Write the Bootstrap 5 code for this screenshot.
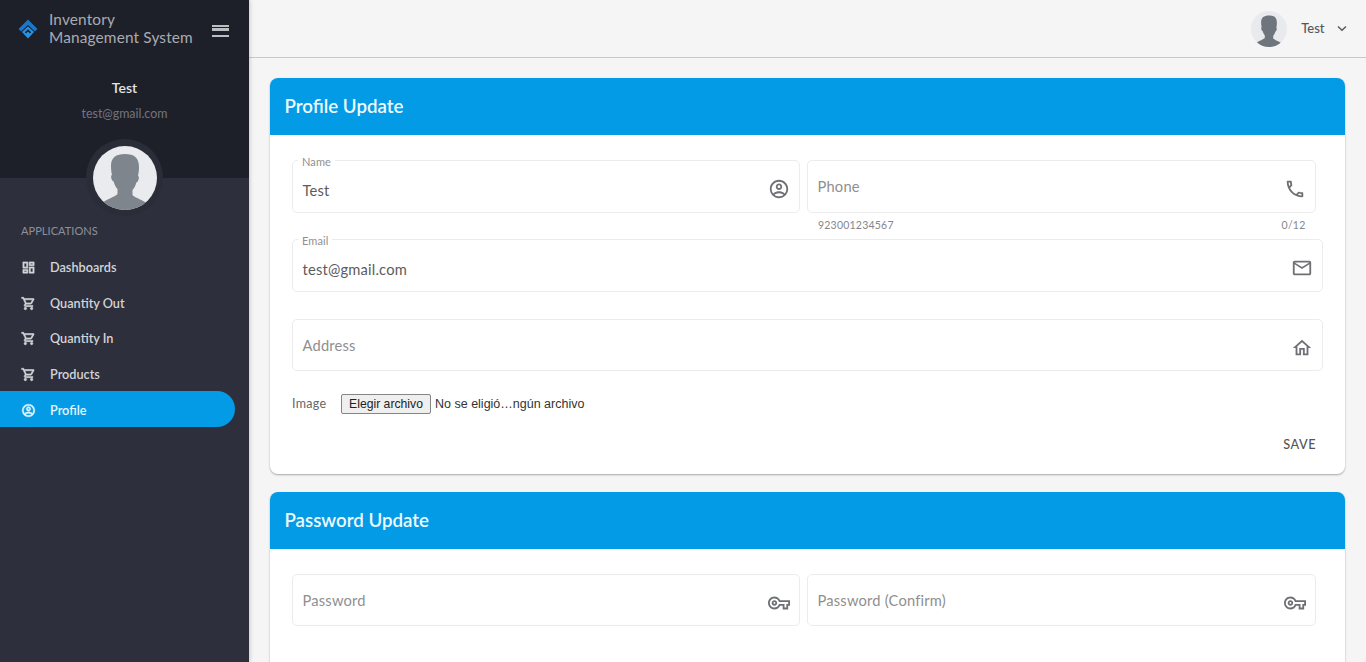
<!DOCTYPE html>
<html lang="en">
<head>
<meta charset="utf-8">
<title>Profile</title>
<link href="https://cdn.jsdelivr.net/npm/bootstrap@5.3.0/dist/css/bootstrap.min.css" rel="stylesheet">
<style>
html,body{height:662px;overflow:hidden}
body{background:#f5f5f5;font-family:"Lato","Open Sans",sans-serif;color:#555;-webkit-font-smoothing:antialiased}
.app-shell{height:662px}
.side-panel{width:249px;flex:none;background:#2d303c;box-shadow:1px 0 4px rgba(0,0,0,.18);z-index:2}
.side-top{height:178px;background:#1e2029}
.brand-row{height:57px;padding:0 20px 0 18px}
.brand-text{font-size:15.4px;line-height:18px;color:#a9abb1;margin-left:11px;margin-top:-2px;letter-spacing:.15px;white-space:nowrap}
.burger{width:17px;height:12px;flex:none;border-top:2.5px solid #bdbec1;border-bottom:2.5px solid #bdbec1;position:relative;margin-left:auto;margin-top:4px}
.burger::after{content:"";position:absolute;left:0;right:0;top:1.500px;height:2.500px;background:#bdbec1}
.user-name{font-size:14px;font-weight:600;color:#e4e4e6;margin-top:22px;line-height:18px;text-align:center}
.user-mail{font-size:12.4px;color:#73757e;margin-top:9px;line-height:16px;text-align:center}
.avatar-ring{width:77px;height:77px;border-radius:50%;background:#2a2c38;padding:6.5px;margin:17px auto 0;position:relative}
.avatar-disc{width:64px;height:64px;border-radius:50%;background:#e9ebee;overflow:hidden;display:block}
.nav-head{font-size:11px;color:#8d8f99;margin:46px 0 0 21px;line-height:14px;letter-spacing:.05px}
.side-list{margin-top:11px;padding:0}
.side-item{height:35.6px;padding-left:21px;padding-top:2px;font-size:12.7px;font-weight:600;color:#d3d4d8;width:235px}
.side-item svg{width:15px;height:15px;fill:currentColor;stroke:currentColor;stroke-width:.9;flex:none;margin-right:14px}
.side-item.is-on{background:#039be5;color:#e6f5fd;border-radius:0 18px 18px 0}
.main-col{min-width:0}
.top-bar{height:58px;background:#f5f5f5;border-bottom:1px solid #c9c9c9;padding-right:19px;flex:none}
.top-avatar{width:36px;height:36px;border-radius:50%;background:#e8eaed;overflow:hidden;display:block}
.top-name{font-size:13px;font-weight:500;color:#55575c;margin:0 12.5px 0 14px}
.page-area{padding:20px 21px 0 21px}
.panel-card{background:#fff;border-radius:8px;box-shadow:0 1px 2px rgba(0,0,0,.32);margin-bottom:17.5px}
.panel-head{height:57px;background:#039be5;border-radius:8px 8px 0 0;padding:0 14.5px;color:#eef9ff;font-size:18.7px;font-weight:600}
.panel-body{padding:25px 22px 0}
.box-field{height:52.5px;border:1px solid #ececec;border-radius:5px;position:relative;padding:0 9px 0 9.5px;font-size:14.7px;letter-spacing:.2px}
.box-field svg{width:22px;height:22px;fill:#6f7074;flex:none;margin-left:auto;margin-top:6px}
.box-field .ph{color:#8f8f8f;margin-top:0}
.box-field .val{color:#5c5c5c;margin-top:7px}
.box-label{position:absolute;left:5px;top:-5px;background:#fff;padding:0 4px;font-size:11px;line-height:12px;color:#8f8f8f;letter-spacing:.1px}
.half-cell{padding-right:7.5px}
.half-cell + .half-cell{margin-left:-.5px;padding-right:7px}
.help-row{font-size:10.5px;color:#85878a;padding:6px 10px 0 11px;line-height:13px;height:26.5px;letter-spacing:.22px}
.gap-field{margin-top:27px}
.upload-row{margin-top:22px;height:22px}
.upload-label{font-size:12.5px;color:#666;width:49px;letter-spacing:.3px}
.pick-btn{font:12.2px "Liberation Sans",Arial,sans-serif;color:#222;background:#efefef;border:1px solid #858585;border-radius:2px;padding:0 7px;height:20px;line-height:18px;width:90px;white-space:nowrap}
.pick-text{font:12.5px "Liberation Sans",Arial,sans-serif;color:#333;margin-left:4px;white-space:nowrap}
.save-row{height:59px;padding:20px 7px 0 0;font-size:12.7px;font-weight:500;letter-spacing:.5px;color:#555;text-align:right;line-height:19px}
</style>
</head>
<body>
<svg width="0" height="0" class="position-absolute">
<defs>
<symbol id="i-account" viewBox="0 0 24 24"><path d="M12 2C6.48 2 2 6.48 2 12s4.48 10 10 10 10-4.48 10-10S17.52 2 12 2zM7.07 18.28c.43-.9 3.05-1.78 4.93-1.78s4.51.88 4.93 1.78C15.57 19.36 13.86 20 12 20s-3.57-.64-4.93-1.72zm11.29-1.45c-1.43-1.74-4.9-2.33-6.36-2.33s-4.93.59-6.36 2.33C4.62 15.49 4 13.82 4 12c0-4.41 3.59-8 8-8s8 3.59 8 8c0 1.82-.62 3.49-1.64 4.83zM12 6c-1.94 0-3.5 1.56-3.5 3.5S10.06 13 12 13s3.5-1.56 3.5-3.5S13.94 6 12 6zm0 5c-.83 0-1.5-.67-1.5-1.5S11.17 8 12 8s1.5.67 1.5 1.5S12.83 11 12 11z"/></symbol>
<symbol id="i-phone" viewBox="0 0 24 24"><path d="M6.54 5c.06.89.21 1.76.45 2.59l-1.2 1.2c-.41-1.2-.67-2.47-.76-3.79h1.51m9.86 12.02c.85.24 1.72.39 2.6.45v1.49c-1.32-.09-2.59-.35-3.8-.75l1.2-1.19M7.5 3H4c-.55 0-1 .45-1 1 0 9.39 7.61 17 17 17 .55 0 1-.45 1-1v-3.49c0-.55-.45-1-1-1-1.24 0-2.45-.2-3.57-.57-.1-.04-.21-.05-.31-.05-.26 0-.51.1-.71.29l-2.2 2.2c-2.83-1.45-5.15-3.76-6.59-6.59l2.2-2.2c.28-.28.36-.67.25-1.02C8.7 6.45 8.5 5.25 8.5 4c0-.55-.45-1-1-1z"/></symbol>
<symbol id="i-mail" viewBox="0 0 24 24"><path d="M22 6c0-1.1-.9-2-2-2H4c-1.1 0-2 .9-2 2v12c0 1.1.9 2 2 2h16c1.1 0 2-.9 2-2V6zm-2 0l-8 5-8-5h16zm0 12H4V8l8 5 8-5v10z"/></symbol>
<symbol id="i-home" viewBox="0 0 24 24"><path d="M12 5.69l5 4.5V18h-2v-6H9v6H7v-7.81l5-4.5M12 3L2 12h3v8h6v-6h2v6h6v-8h3L12 3z"/></symbol>
<symbol id="i-key" viewBox="0 0 24 24"><path d="M22 19h-6v-4h-2.68c-1.14 2.42-3.6 4-6.32 4-3.86 0-7-3.14-7-7s3.14-7 7-7c2.72 0 5.17 1.58 6.32 4H24v6h-2v4zm-4-2h2v-4h2v-2H11.94l-.23-.67C11.01 8.34 9.11 7 7 7c-2.76 0-5 2.24-5 5s2.24 5 5 5c2.11 0 4.01-1.34 4.71-3.33l.23-.67H18v4zM7 15c-1.65 0-3-1.35-3-3s1.35-3 3-3 3 1.35 3 3-1.35 3-3 3zm0-4c-.55 0-1 .45-1 1s.45 1 1 1 1-.45 1-1-.45-1-1-1z"/></symbol>
<symbol id="i-dash" viewBox="0 0 24 24"><path d="M19 5v2h-4V5h4M9 5v6H5V5h4m10 8v6h-4v-6h4M9 17v2H5v-2h4M21 3h-8v6h8V3zM11 3H3v10h8V3zm10 8h-8v10h8V11zm-10 4H3v6h8v-6z"/></symbol>
<symbol id="i-cart" viewBox="0 0 24 24"><path d="M15.55 13c.75 0 1.41-.41 1.75-1.03l3.58-6.49c.37-.66-.11-1.48-.87-1.48H5.21l-.94-2H1v2h2l3.6 7.59-1.35 2.44C4.52 15.37 5.48 17 7 17h12v-2H7l1.1-2h7.45zM6.16 6h12.15l-2.76 5H8.53L6.16 6zM7 18c-1.1 0-1.99.9-1.99 2S5.9 22 7 22s2-.9 2-2-.9-2-2-2zm10 0c-1.1 0-1.99.9-1.99 2s.89 2 1.99 2 2-.9 2-2-.9-2-2-2z"/></symbol>
<symbol id="i-person" viewBox="0 0 64 64"><path d="M32 8c-9 0-14 3.500-14 12 0 4 .5 7 1 9-1.200 0-1.200 3 .3 5.500.6 1 1.200 1 1.400 1 .8 3.500 2.300 6 3.800 7.500v5c-2 2.500-11 5.500-18 10C12 62 22 64 32 64s20-2 25.500-5c-7-4.500-16-7.500-18-10v-5c1.500-1.500 3-4 3.800-7.500.2 0 .8 0 1.400-1 1.500-2.500 1.500-5.500.3-5.500.5-2 1-5 1-9C46 11.500 41 8 32 8z"/></symbol>
</defs>
</svg>
<div class="app-shell d-flex">
  <aside class="side-panel d-flex flex-column">
    <div class="side-top">
      <div class="brand-row d-flex align-items-center">
        <svg width="20" height="20" viewBox="0 0 20 20" class="flex-shrink-0">
          <path d="M10 0.500 19.500 10 16.800 12.600 10 6 3.200 12.600 0.500 10z" fill="#1976c9"/>
          <path d="M10 7.500 16 13 10 19.500 4 13z" fill="#2196e8"/>
          <path d="M6.800 13.200 10 10.300 13.200 13.200 12 14.400 10 12.600 8 14.400z" fill="#1e2029"/>
        </svg>
        <div class="brand-text">Inventory<br>Management System</div>
        <span class="burger"></span>
      </div>
      <div class="user-name">Test</div>
      <div class="user-mail">test@gmail.com</div>
      <div class="avatar-ring">
        <svg class="avatar-disc" viewBox="0 0 64 64"><use href="#i-person" fill="#7f858c"/></svg>
      </div>
    </div>
    <div class="nav-head">APPLICATIONS</div>
    <div class="side-list">
      <div class="side-item d-flex align-items-center"><svg><use href="#i-dash"/></svg>Dashboards</div>
      <div class="side-item d-flex align-items-center"><svg><use href="#i-cart"/></svg>Quantity Out</div>
      <div class="side-item d-flex align-items-center"><svg><use href="#i-cart"/></svg>Quantity In</div>
      <div class="side-item d-flex align-items-center"><svg><use href="#i-cart"/></svg>Products</div>
      <div class="side-item is-on d-flex align-items-center"><svg><use href="#i-account"/></svg>Profile</div>
    </div>
  </aside>
  <div class="main-col flex-grow-1 d-flex flex-column">
    <header class="top-bar d-flex align-items-center justify-content-end">
      <svg class="top-avatar" viewBox="0 0 64 64"><use href="#i-person" fill="#6f757d"/></svg>
      <span class="top-name">Test</span>
      <svg width="10" height="7" viewBox="0 0 10 7"><path d="M1 1.500 5 5.200 9 1.500" fill="none" stroke="#55575c" stroke-width="1.400"/></svg>
    </header>
    <main class="page-area">
      <section class="panel-card">
        <div class="panel-head d-flex align-items-center">Profile Update</div>
        <div class="panel-body">
          <div class="row g-0">
            <div class="col-6 half-cell">
              <div class="box-field d-flex align-items-center"><span class="box-label">Name</span><span class="val">Test</span><svg><use href="#i-account"/></svg></div>
            </div>
            <div class="col-6 half-cell">
              <div class="box-field d-flex align-items-center"><span class="ph">Phone</span><svg><use href="#i-phone"/></svg></div>
              <div class="help-row d-flex justify-content-between"><span>923001234567</span><span>0/12</span></div>
            </div>
          </div>
          <div class="box-field d-flex align-items-center"><span class="box-label">Email</span><span class="val">test@gmail.com</span><svg><use href="#i-mail"/></svg></div>
          <div class="box-field gap-field d-flex align-items-center"><span class="ph">Address</span><svg><use href="#i-home"/></svg></div>
          <div class="upload-row d-flex align-items-center">
            <span class="upload-label">Image</span>
            <button type="button" class="pick-btn">Elegir archivo</button>
            <span class="pick-text">No se eligió…ngún archivo</span>
          </div>
          <div class="save-row">SAVE</div>
        </div>
      </section>
      <section class="panel-card">
        <div class="panel-head d-flex align-items-center">Password Update</div>
        <div class="panel-body pb-5">
          <div class="row g-0">
            <div class="col-6 half-cell">
              <div class="box-field d-flex align-items-center"><span class="ph">Password</span><svg><use href="#i-key"/></svg></div>
            </div>
            <div class="col-6 half-cell">
              <div class="box-field d-flex align-items-center"><span class="ph">Password (Confirm)</span><svg><use href="#i-key"/></svg></div>
            </div>
          </div>
        </div>
      </section>
    </main>
  </div>
</div>
</body>
</html>
